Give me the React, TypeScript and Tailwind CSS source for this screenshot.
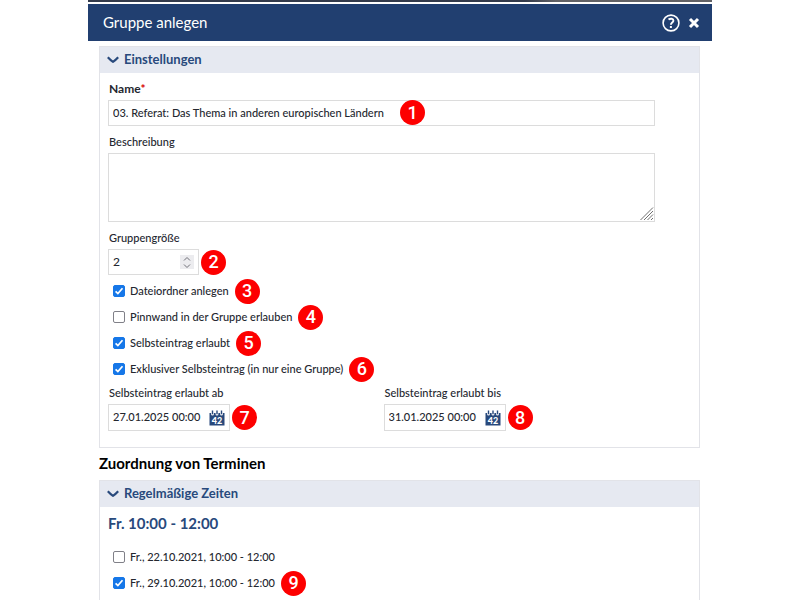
import type React from "react";

const Badge: React.FC<{ n: number; className?: string }> = ({ n, className = "" }) => (
  <span
    className={
      "inline-flex shrink-0 items-center justify-center w-[25px] h-[25px] rounded-full bg-[#fd0000] font-[Roboto,sans-serif] text-lg leading-none font-medium text-white " +
      className
    }
  >
    {n}
  </span>
);

const CalendarIcon: React.FC = () => (
  <svg viewBox="0 0 16 16" className="w-4 h-4" aria-hidden="true">
    <path
      d="M0.5 3H2.1V4.2a1.4 1.4 0 0 0 2.8 0V3H6.6V4.2a1.4 1.4 0 0 0 2.8 0V3H11.1V4.2a1.4 1.4 0 0 0 2.8 0V3H15.5V15.5H0.5Z"
      fill="#28497c"
    />
    <path d="M3.5 0.5v3.7M8 0.5v3.7M12.5 0.5v3.7" stroke="#28497c" strokeWidth={1.4} />
    <text x="8" y="13.8" textAnchor="middle" fontSize="9" fontWeight="900" fontFamily="Lato, sans-serif" fill="#fff">
      42
    </text>
  </svg>
);

const CheckRow: React.FC<{ label: string; checked?: boolean; badge?: number }> = ({ label, checked, badge }) => (
  <div className="flex items-center gap-[6px] h-[26px]">
    <label className="flex items-center gap-[5px] whitespace-nowrap">
      <span className="grid w-3 h-3">
        <input
          type="checkbox"
          defaultChecked={checked}
          className="peer col-start-1 row-start-1 appearance-none w-3 h-3 rounded-xs border border-[#808088] bg-white checked:border-[#1677e8] checked:bg-[#1677e8]"
        />
        <svg
          viewBox="0 0 12 12"
          fill="none"
          stroke="#ffffff"
          strokeWidth={1.7}
          className="col-start-1 row-start-1 w-3 h-3 pointer-events-none invisible peer-checked:visible"
          aria-hidden="true"
        >
          <path d="M2.6 6.3l2.3 2.3 4.6-5.3" />
        </svg>
      </span>
      {label}
    </label>
    {badge && <Badge n={badge} />}
  </div>
);

const DateField: React.FC<{ id: string; label: string; value: string; badge: number }> = ({
  id,
  label,
  value,
  badge,
}) => (
  <div className="flex-1">
    <label htmlFor={id} className="block pb-px pl-px leading-5">
      {label}
    </label>
    <div className="flex items-center gap-[2px]">
      <div className="flex items-center w-[122px] h-[27px] border border-[#dcdcdc] pr-1">
        <input id={id} type="text" defaultValue={value} className="min-w-0 flex-1 pl-1 outline-none" />
        <button type="button" aria-label="Kalender">
          <CalendarIcon />
        </button>
      </div>
      <Badge n={badge} />
    </div>
  </div>
);

const Panel: React.FC<{ title: string; children: React.ReactNode }> = ({ title, children }) => (
  <section className="border border-[#e2e3e8]">
    <h2 className="bg-[#e6e9f1]">
      <button type="button" className="flex w-full items-center gap-[5px] h-[26px] pl-[7px] text-[13px] font-bold text-[#28497c]">
        <svg viewBox="0 0 12 8" fill="none" stroke="#28497c" strokeWidth={2.2} className="w-3 h-2" aria-hidden="true">
          <path d="M0.8 1.3C2.3 3 4 4.5 6 5.8C8 4.5 9.7 3 11.2 1.3" />
        </svg>
        {title}
      </button>
    </h2>
    <div className="pl-2 pr-11">{children}</div>
  </section>
);

const App: React.FC = () => {
  return (
    <div className="h-screen overflow-hidden bg-white font-[Lato,sans-serif] text-[11px] font-medium text-[#24272f]">
      <div className="mx-auto w-[78%]">
        <div className="h-[2px] bg-linear-to-r from-[#343b4b] from-70% to-[#626266] to-75%" />
        <header className="mt-[2px] flex h-[37px] items-center justify-between bg-[#213f70] pl-[15px] pr-3 text-white">
          <h1 className="text-[15px] font-normal">Gruppe anlegen</h1>
          <div className="flex items-center gap-2">
            <button type="button" aria-label="Hilfe">
              <svg viewBox="0 0 18 18" fill="none" stroke="#ffffff" className="w-[18px] h-[18px]" aria-hidden="true">
                <circle cx="9" cy="9" r="7.9" strokeWidth={1.6} />
                <path d="M6.5 5.5C8.4 4.2 11.5 4.4 11.4 6.7C11.3 8.5 8.9 8.6 8.9 10.8" strokeWidth={1.9} />
                <path d="M8.9 12v2" strokeWidth={2} />
              </svg>
            </button>
            <button type="button" aria-label="Schließen">
              <svg viewBox="0 0 12 12" className="w-3 h-3" fill="none" stroke="#ffffff" strokeWidth={3} aria-hidden="true">
                <path d="M2 2l8 8M10 2l-8 8" />
              </svg>
            </button>
          </div>
        </header>

        <main className="pt-[5px] pl-[11px] pr-3">
          <Panel title="Einstellungen">
            <label htmlFor="name" className="block pt-[6px] pb-px pl-px text-xs leading-5 font-bold">
              Name<span className="text-[#d60000]">*</span>
            </label>
            <div className="relative">
              <input
                id="name"
                type="text"
                defaultValue="03. Referat: Das Thema in anderen europischen Ländern"
                className="block w-full h-[26px] border border-[#dcdcdc] px-1 pb-[2px] outline-none"
              />
              <Badge n={1} className="absolute left-[292px] top-0" />
            </div>

            <label htmlFor="description" className="block pt-[6px] pb-px pl-px leading-5">
              Beschreibung
            </label>
            <div className="relative">
              <textarea
                id="description"
                className="block w-full h-[69px] resize-none border border-[#dcdcdc] px-1 outline-none"
              />
              <svg
                viewBox="0 0 14 14"
                fill="none"
                stroke="#707070"
                strokeWidth={1}
                className="absolute right-px bottom-px w-[14px] h-[14px] pointer-events-none"
                aria-hidden="true"
              >
                <path d="M0.5 13L13 0.5M4 13L13 4M7.5 13L13 7.5M11 13L13 11" />
              </svg>
            </div>

            <label htmlFor="size" className="block pt-[6px] pb-px pl-px leading-5">
              Gruppengröße
            </label>
            <div className="flex items-center gap-[2px]">
              <div className="flex items-center w-[91px] h-[26px] border border-[#dcdcdc] pr-1">
                <input id="size" type="text" inputMode="numeric" defaultValue="2" className="min-w-0 flex-1 pl-1 text-xs outline-none" />
                <div className="flex flex-col w-[14px] bg-[#ececef]">
                  <button type="button" aria-label="Erhöhen" className="flex h-[7px] items-end justify-center">
                    <svg viewBox="0 0 8 6" className="w-2 h-[6px]" fill="none" stroke="#707078" aria-hidden="true">
                      <path d="M1 4.5L4 1.5L7 4.5" />
                    </svg>
                  </button>
                  <button type="button" aria-label="Verringern" className="flex h-[7px] items-end justify-center">
                    <svg viewBox="0 0 8 6" className="w-2 h-[6px]" fill="none" stroke="#707078" aria-hidden="true">
                      <path d="M1 1.5L4 4.5L7 1.5" />
                    </svg>
                  </button>
                </div>
              </div>
              <Badge n={2} />
            </div>

            <div className="pt-[3px] pb-px pl-[5px]">
              <CheckRow label="Dateiordner anlegen" checked badge={3} />
              <CheckRow label="Pinnwand in der Gruppe erlauben" badge={4} />
              <CheckRow label="Selbsteintrag erlaubt" checked badge={5} />
              <CheckRow label="Exklusiver Selbsteintrag (in nur eine Gruppe)" checked badge={6} />
            </div>

            <div className="flex gap-1 pb-4">
              <DateField id="from" label="Selbsteintrag erlaubt ab" value="27.01.2025 00:00" badge={7} />
              <DateField id="until" label="Selbsteintrag erlaubt bis" value="31.01.2025 00:00" badge={8} />
            </div>
          </Panel>

          <h2 className="pt-[5px] pb-[7px] text-[15px] leading-5 font-bold text-black">Zuordnung von Terminen</h2>

          <Panel title="Regelmäßige Zeiten">
            <h3 className="pt-[6px] text-[15px] leading-5 font-bold text-[#28497c]">Fr. 10:00 - 12:00</h3>
            <div className="pt-[11px] pb-4 pl-[5px]">
              <CheckRow label="Fr., 22.10.2021, 10:00 - 12:00" />
              <CheckRow label="Fr., 29.10.2021, 10:00 - 12:00" checked badge={9} />
            </div>
          </Panel>
        </main>
      </div>
    </div>
  );
};

export default App;
